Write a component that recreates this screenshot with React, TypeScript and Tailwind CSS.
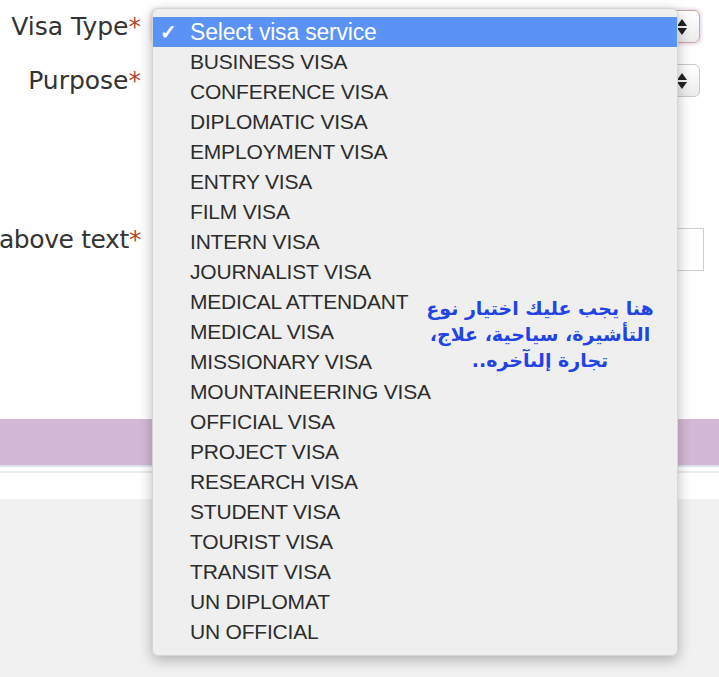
import React from "react";

const visaTypes = [
  "BUSINESS VISA",
  "CONFERENCE VISA",
  "DIPLOMATIC VISA",
  "EMPLOYMENT VISA",
  "ENTRY VISA",
  "FILM VISA",
  "INTERN VISA",
  "JOURNALIST VISA",
  "MEDICAL ATTENDANT",
  "MEDICAL VISA",
  "MISSIONARY VISA",
  "MOUNTAINEERING VISA",
  "OFFICIAL VISA",
  "PROJECT VISA",
  "RESEARCH VISA",
  "STUDENT VISA",
  "TOURIST VISA",
  "TRANSIT VISA",
  "UN DIPLOMAT",
  "UN OFFICIAL",
];

function Label({ text, tight }: { text: string; tight?: boolean }) {
  return (
    <div
      className={
        "w-[141px] shrink-0 flex justify-end whitespace-nowrap text-[25px] leading-[30px] text-[#333] font-['DejaVu_Sans',sans-serif] " +
        (tight ? "tracking-[-0.4px] -mt-[3px]" : "")
      }
    >
      <span>{text}</span>
      <span className="text-[#b4472c]">*</span>
    </div>
  );
}

function Arrows() {
  return (
    <svg width="12" height="20" viewBox="0 0 12 20" className="text-[#222]">
      <path d="M6 2 L11 9 L1 9 Z" fill="currentColor" />
      <path d="M6 18 L11 11 L1 11 Z" fill="currentColor" />
    </svg>
  );
}

function SelectBox({ glow }: { glow?: boolean }) {
  return (
    <div
      className={
        "ml-[11px] h-[33px] w-[548px] rounded-[6px] border bg-gradient-to-b from-white to-[#ececec] flex items-center justify-end pr-[11px] " +
        (glow ? "border-[#c9a7a0] shadow-[0_0_3px_2px_#e9e0ee]" : "border-[#c8c8c8]")
      }
    >
      <Arrows />
    </div>
  );
}

export default function App() {
  return (
    <div className="relative w-[719px] h-[677px] overflow-hidden bg-white">
      <div className="flex flex-col">
        <div className="flex items-center mt-[10px]">
          <Label text="Visa Type" />
          <SelectBox glow />
        </div>
        <div className="flex items-center mt-[21px]">
          <Label text="Purpose" />
          <SelectBox />
        </div>
        <div className="flex items-start mt-[131px]">
          <Label text="above text" tight />
          <div className="ml-[11px] h-[43px] w-[552px] border border-[#cfcfcf] bg-white" />
        </div>
        <div className="mt-[148px] h-[46px] bg-[#d3b9d4]" />
        <div className="h-[2px] bg-[#dde3ee]" />
        <div className="mt-[4px] h-[2px] bg-[#ececec]" />
        <div className="h-[26px] bg-white" />
        <div className="h-[200px] bg-[#f1f1f1]" />
      </div>

      {/* open dropdown */}
      <div className="absolute left-[152px] top-[8px] w-[526px] pt-[8px] pb-[8px] rounded-[6px] bg-[#efefef] border border-[#d6d6d6] shadow-[0_4px_14px_rgba(0,0,0,0.28)] font-['Liberation_Sans',Arial,sans-serif] text-[21px] tracking-[-0.2px]">
        <div className="h-[30px] flex items-center bg-[#5a92f5] text-white">
          <span className="w-[37px] pl-[7px] text-[20px] font-bold">✓</span>
          <span className="text-[23px]">Select visa service</span>
        </div>
        {visaTypes.map((v) => (
          <div key={v} className="h-[30px] flex items-center pl-[37px] text-[#2c2c2c]">
            {v}
          </div>
        ))}
        <div
          dir="rtl"
          className="absolute left-[272px] top-[286px] w-[230px] text-center text-[19px] leading-[26px] font-bold text-[#2244e4] font-['DejaVu_Sans',sans-serif]"
        >
          <div>هنا يجب عليك اختيار نوع</div>
          <div>التأشيرة، سياحية، علاج،</div>
          <div>تجارة إلىآخره..</div>
        </div>
      </div>
    </div>
  );
}
